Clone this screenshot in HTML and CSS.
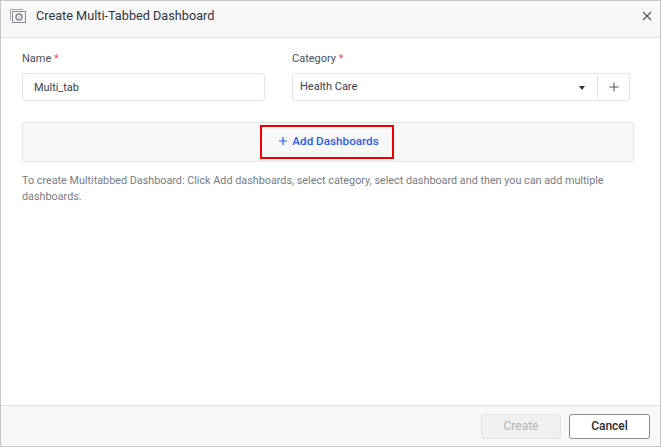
FILE: index.html
```html
<!DOCTYPE html>
<html lang="en">
<head>
<meta charset="utf-8">
<title>Create Multi-Tabbed Dashboard</title>
<link rel="stylesheet" href="styles.css">
</head>
<body>
<div class="dialog">
  <header class="head">
    <svg class="logo" width="18" height="16" viewBox="0 0 18 16" fill="none">
      <path d="M2.5 11.5H1.5V1.5H13.5V2.5" stroke="#a5a7ad"/>
      <rect x="3.5" y="3.5" width="13" height="11" fill="#f4f4f6" stroke="#8a8d95"/>
      <circle cx="10" cy="9" r="3" stroke="#85878f" stroke-width="1.4"/>
      <circle cx="10" cy="9" r="1" fill="#c9cacd"/>
    </svg>
    <h1 class="title">Create Multi-Tabbed Dashboard</h1>
    <svg class="close" width="10" height="10" viewBox="0 0 10 10" fill="none">
      <path d="M1 1L9 9M9 1L1 9" stroke="#555" stroke-width="1.1"/>
    </svg>
  </header>
  <main class="body">
    <div class="fields">
      <div class="field name-field">
        <label class="label">Name <span class="req">*</span></label>
        <div class="input">Multi_tab</div>
      </div>
      <div class="field cat-field">
        <label class="label">Category <span class="req">*</span></label>
        <div class="cat-row">
          <div class="select"><span>Health Care</span><i class="caret"></i></div>
          <div class="plus-btn">
            <svg width="10" height="10" viewBox="0 0 10 10" fill="none"><path d="M5 .5V9.5M.5 5H9.5" stroke="#4a5568" stroke-width="1"/></svg>
          </div>
        </div>
      </div>
    </div>
    <div class="panel">
      <div class="add">
        <svg width="8" height="8" viewBox="0 0 8 8" fill="none"><path d="M4 0V8M0 4H8" stroke="#2b5cf0" stroke-width="1.2"/></svg>
        <span>Add Dashboards</span>
      </div>
    </div>
    <p class="help">To create Multitabbed Dashboard: Click Add dashboards, select category, select dashboard and then you can add multiple dashboards.</p>
  </main>
  <footer class="foot">
    <button class="btn btn-off">Create</button>
    <button class="btn btn-cancel">Cancel</button>
  </footer>
</div>
</body>
</html>
```

FILE: styles.css
```css
* { box-sizing: border-box; }
html, body { margin: 0; height: 100%; }
body { font-family: Roboto, "Liberation Sans", sans-serif; font-size: 11px; color: #3c4250; background: #fff; }
.dialog { width: 661px; height: 447px; border: 1px solid #c6c6c6; display: flex; flex-direction: column; background: #fff; }
.head { height: 37px; flex: none; background: #f8f8f8; border-bottom: 1px solid #e2e2e2; display: flex; align-items: center; padding: 0 8px 8px 8px; }
.logo { flex: none; margin: 2px 9px 0 0; }
.title { margin: 0; flex: 1; font-size: 12.7px; font-weight: 400; color: #2e3440; }
.close { flex: none; margin-top: 2px; }
.body { flex: 1; padding: 13px 26px 0 21px; }
.fields { display: flex; }
.field { display: flex; flex-direction: column; }
.name-field { width: 243px; margin-right: 27px; }
.cat-field { width: 338px; }
.label { line-height: 16px; height: 22px; color: #4a5060; }
.req { color: #f0506e; }
.input { height: 28px; border: 1px solid #e4e4e4; border-radius: 3px; padding: 0 11px; display: flex; align-items: center; color: #3a404e; font-size: 10.9px; }
.cat-row { display: flex; }
.select { width: 306px; height: 28px; border: 1px solid #e4e4e4; border-radius: 3px; padding: 0 12px 2px 7px; display: flex; align-items: center; justify-content: space-between; color: #3a404e; }
.caret { width: 0; height: 0; border-left: 3.5px solid transparent; border-right: 3.5px solid transparent; border-top: 4px solid #333; margin-top: 4px; }
.plus-btn { width: 32px; height: 28px; border: 1px solid #e4e4e4; border-left: 0; border-radius: 0 3px 3px 0; display: flex; align-items: center; justify-content: center; }
.panel { height: 40px; margin-top: 21px; background: #f8f8f8; border: 1px solid #e6e6e6; border-radius: 3px; display: flex; justify-content: center; align-items: center; }
.add { width: 134px; height: 34px; border: 2px solid #f00000; padding: 0 0 2px 4px; display: flex; align-items: center; justify-content: center; gap: 5px; color: #2b5cf0; font-weight: 500; font-size: 11.7px; margin-right: 2px; }
.help { margin: 10.5px 0 0; line-height: 16.5px; color: #777b84; font-size: 10.8px; }
.foot { height: 41px; flex: none; background: #f8f8f8; border-top: 1px solid #e2e2e2; display: flex; justify-content: flex-end; align-items: center; gap: 8px; padding: 0 10px 0 0; }
.btn { width: 81px; height: 25px; border-radius: 3px; font: inherit; font-size: 12px; padding: 0; }
.btn-off { width: 80px; background: #f0f0f0; border: 1px solid #e2e2e2; color: #b3b3b3; }
.btn-cancel { background: #fff; border: 1px solid #8a8a8a; color: #2b2b2b; font-weight: 500; }
```
